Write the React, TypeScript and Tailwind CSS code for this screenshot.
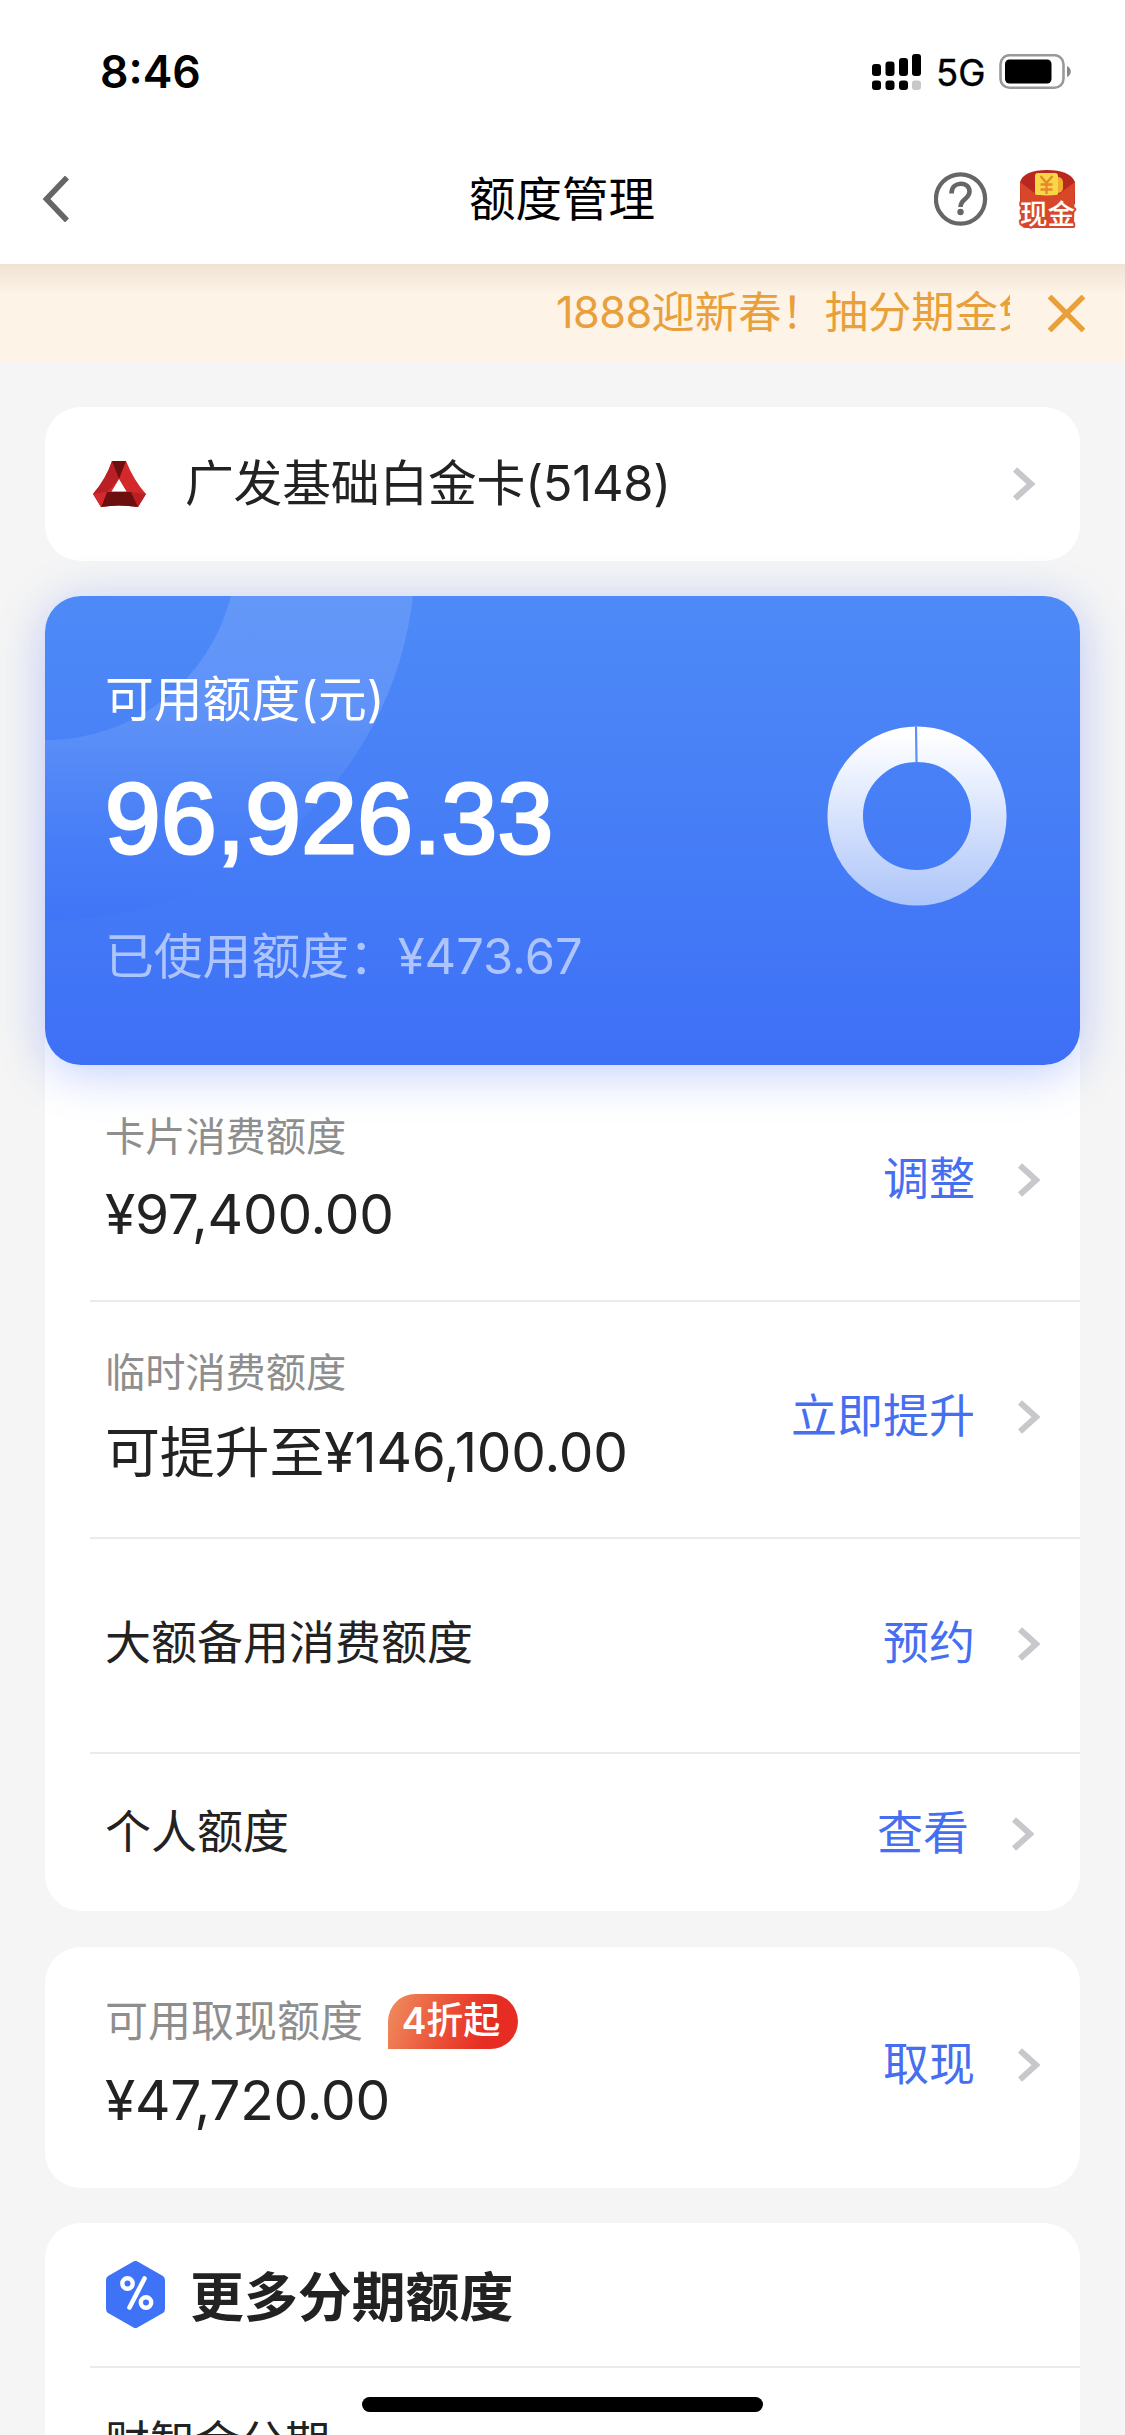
import { ReactNode } from "react";

const Chevron = () => (
    <svg className="w-[22px] h-[34px] shrink-0" viewBox="0 0 22 34" fill="none">
        <path d="M2 2.5 L18 17 L2 31.5" stroke="#c7c7cc" strokeWidth="6" />
    </svg>
);

const StatusBar = () => (
    <div className="flex h-[144px] pl-[100px] pr-[53px] justify-between">
        <div className="text-[44.5px] leading-[144px] font-semibold text-black">8:46</div>
        <div className="flex items-center h-[144px]">
            <svg className="w-[50px] h-[37px]" viewBox="0 0 50 37">
                <rect x="0" y="10" width="9" height="12" rx="3" />
                <rect x="13.5" y="7.5" width="9" height="14.5" rx="3" />
                <rect x="27" y="4" width="9" height="18" rx="3" />
                <rect x="40" y="0" width="9" height="22" rx="3" />
                <rect x="0" y="26.5" width="9" height="9.5" rx="3" />
                <rect x="13.5" y="26.5" width="9" height="9.5" rx="3" />
                <rect x="27" y="26.5" width="9" height="9.5" rx="3" />
                <rect x="40" y="26.5" width="9" height="9.5" rx="3" fill="#c8c8c8" />
            </svg>
            <span className="ml-[14px] w-[49px] pt-[2px] text-[36.5px] leading-[148px] text-black whitespace-nowrap [-webkit-text-stroke:0.4px_#000]">5G</span>
            <svg className="ml-[14px] w-[73px] h-[36px]" viewBox="0 0 73 36">
                <rect x="1.5" y="1.2" width="63" height="32.6" rx="9" fill="none" stroke="#999" strokeWidth="2.6" />
                <rect x="6" y="5.5" width="46.5" height="24" rx="4.5" />
                <path d="M68 12 C73 14 73 21 68 23 Z" fill="#888" />
            </svg>
        </div>
    </div>
);

const RedPacket = () => (
    <svg className="ml-[31px] w-[57px] h-[58px] overflow-visible" viewBox="0 0 57 58">
        <path d="M1 12 Q5 0 28 0 Q51 0 56 12 L56 34 L1 34 Z" fill="#b9281f" />
        <rect x="30" y="7" width="14" height="16" rx="5" fill="#eeae2e" />
        <rect x="16" y="3" width="23" height="23" rx="3" fill="#f8d648" />
        <path d="M1 12 L17 24 Q28 27 40 24 L56 12 L55 53 Q55 58 50 58 L7 58 Q2 58 2 53 Z" fill="#d9472b" />
        <rect x="16" y="12" width="23" height="13" rx="2" fill="#f8d648" />
        <path d="M21.5 6 L27.5 13 L33.5 6 M27.5 13 L27.5 24 M21.5 14.5 L33.5 14.5 M21.5 19.5 L33.5 19.5" stroke="#e8862c" strokeWidth="2.4" fill="none" />
        <text x="28.5" y="54" fontSize="27.5" textAnchor="middle" fill="#fff" fontWeight="500" stroke="#d9472b" strokeWidth="4" strokeLinejoin="round" paintOrder="stroke">现金</text>
    </svg>
);

const NavBar = () => (
    <div className="flex items-center h-[120px] pb-[10px] pl-[42px] pr-[49px]">
        <svg className="w-[27px] h-[46px]" viewBox="0 0 27 46" fill="none">
            <path d="M25 1.5 L4.5 23 L25 44.5" stroke="#666" strokeWidth="5.6" />
        </svg>
        <h1 className="flex-1 pl-[400px] text-[46.5px] leading-[60px] text-black">额度管理</h1>
        <svg className="w-[54px] h-[56px]" viewBox="0 0 54 56" fill="none">
            <circle cx="26.5" cy="28" r="24.6" stroke="#666" strokeWidth="4.2" />
            <path d="M17.5 22.5 C17.5 9.5 35.5 10 35.5 20.5 C35.5 28 26.5 28 26.5 36" stroke="#666" strokeWidth="4.6" />
            <circle cx="26.5" cy="41" r="3.2" fill="#666" />
        </svg>
        <RedPacket />
    </div>
);

const Notice = () => (
    <div className="h-[98px] bg-[#fdf3e6]">
        <div className="flex items-center h-full bg-[linear-gradient(rgba(110,85,60,0.1),rgba(110,85,60,0)_30px)]">
            <div className="ml-[556px] w-[454px] overflow-hidden whitespace-nowrap text-[43.3px] leading-[60px] text-[#e8a03c] pb-[2px]">
                <span className="tracking-[-0.6px]">1888</span>迎新春！抽分期金免
            </div>
            <svg className="ml-[38px] w-[37px] h-[37px]" viewBox="0 0 37 37">
                <path d="M1.5 1.5 L35.5 35.5 M35.5 1.5 L1.5 35.5" stroke="#e8a03c" strokeWidth="5.4" />
            </svg>
        </div>
    </div>
);

const BankLogo = () => (
    <svg className="w-[54px] h-[46px]" viewBox="0 0 54 46">
        <path d="M19 0 L33 0 Q41 20 53 33 L45 46 Q26 43 8 46 L0 33 Q13 18 19 0 Z" fill="#d3282c" />
        <path d="M19 0 L26 18 L14 31 L0 33 Q13 18 19 0 Z" fill="#b91f24" />
        <path d="M38 31 L53 33 L45 46 Z" fill="#b91f24" />
        <path d="M19 0 L33 0 L26 18 Z" fill="#6d0f0e" />
        <path d="M14 31 L38 31 L45 46 Q26 43 8 46 Z" fill="#6d0f0e" />
        <path d="M0 33 L14 31 L8 46 Z" fill="#d3282c" />
        <path d="M26 18 L33.5 30.5 L18.5 30.5 Z" fill="#fff" />
    </svg>
);

const BalanceCard = () => (
    <div className="relative overflow-hidden h-[469px] rounded-[36px] bg-gradient-to-b from-[#4e8af7] to-[#3e70f6]">
        <svg className="absolute left-0 top-0 w-[400px] h-[340px]" viewBox="0 0 400 340" fill="none">
            <defs>
                <linearGradient id="ring" x1="0" y1="0" x2="0" y2="1">
                    <stop offset="0.35" stopColor="#fff" stopOpacity="0.12" />
                    <stop offset="0.75" stopColor="#5a88fb" stopOpacity="0.1" />
                    <stop offset="1" stopColor="#2f62f5" stopOpacity="0.14" />
                </linearGradient>
            </defs>
            <path d="M368 0 A365 365 0 0 1 0 324 L0 144 A190 190 0 0 0 186 0 Z" fill="url(#ring)" />
        </svg>
        <div className="relative flex h-full justify-between">
            <div className="pl-[60px] pt-[74px]">
                <div className="text-[48.8px] leading-[60px] text-white">可用额度(元)</div>
                <div className="mt-[38px] font-['Liberation_Sans'] text-[100px] leading-[100px] tracking-[0.4px] text-white [-webkit-text-stroke:3px_#fff]">96,926.33</div>
                <div className="mt-[59px] text-[48.8px] leading-[60px] text-[#adc5fc]">已使用额度：¥473.67</div>
            </div>
            <svg className="mt-[129px] mr-[73px] w-[180px] h-[181px]" viewBox="0 0 180 181" fill="none">
                <defs>
                    <linearGradient id="donut" x1="0" y1="0" x2="0" y2="181" gradientUnits="userSpaceOnUse">
                        <stop offset="0.05" stopColor="#fff" />
                        <stop offset="1" stopColor="#adc5fa" />
                    </linearGradient>
                </defs>
                <circle cx="90" cy="91" r="71.8" stroke="url(#donut)" strokeWidth="35.5" />
                <path d="M89 0 L89.5 37" stroke="#5d91f8" strokeWidth="2.2" />
            </svg>
        </div>
    </div>
);

type RowProps = {
    className: string;
    action: string;
    actionClass: string;
    children: ReactNode;
};

const Row = ({ className, action, actionClass, children }: RowProps) => (
    <div className={`flex justify-between ml-[45px] pl-[15px] ${className}`}>
        <div>{children}</div>
        <div className={`flex items-center gap-[43px] ${actionClass}`}>
            <span className="pb-[4px] text-[46px] leading-[60px] text-[#456ff0]">{action}</span>
            <Chevron />
        </div>
    </div>
);

const App = () => {
    return (
        <div className="relative w-[1125px] h-[2435px] overflow-hidden bg-[#f5f5f5] font-[Inter,'Noto_Sans_CJK_SC',sans-serif] text-[#222]">
            <div className="bg-white">
                <StatusBar />
                <NavBar />
            </div>
            <Notice />

            <div className="px-[45px] pt-[45px]">
                <div className="flex items-center h-[154px] rounded-[36px] bg-white pl-[48px] pr-[45px]">
                    <BankLogo />
                    <span className="flex-1 ml-[38px] text-[48.8px] leading-[60px] tracking-[-0.2px]">广发基础白金卡(5148)</span>
                    <Chevron />
                </div>

                <div className="mt-[35px] rounded-[36px] bg-white">
                    <div className="rounded-[36px] shadow-[0_8px_48px_rgba(62,100,246,0.32)]">
                        <BalanceCard />
                    </div>
                    <Row className="h-[237px] border-b-2 border-[#ebebeb]" action="调整" actionClass="pr-[40px] pb-[5px]">
                        <div className="pt-[42px] text-[40.2px] leading-[60px] text-[#8e8e8e]">卡片消费额度</div>
                        <div className="mt-[17px] text-[55px] leading-[60px] tracking-[-0.2px]">¥97,400.00</div>
                    </Row>
                    <Row className="h-[237px] border-b-2 border-[#ebebeb]" action="立即提升" actionClass="pr-[40px] pb-[5px]">
                        <div className="pt-[41px] text-[40.2px] leading-[60px] text-[#8e8e8e]">临时消费额度</div>
                        <div className="mt-[19px] text-[55px] leading-[60px] tracking-[-0.2px]">可提升至¥146,100.00</div>
                    </Row>
                    <Row className="h-[215px] border-b-2 border-[#ebebeb]" action="预约" actionClass="pr-[40px] pb-[3px]">
                        <div className="pt-[73px] text-[46px] leading-[60px]">大额备用消费额度</div>
                    </Row>
                    <Row className="h-[157px]" action="查看" actionClass="pr-[46px] pt-[3px]">
                        <div className="pt-[47px] text-[46px] leading-[60px]">个人额度</div>
                    </Row>
                </div>

                <div className="mt-[36px] rounded-[36px] bg-white">
                    <Row className="h-[241px]" action="取现" actionClass="pr-[40px] pb-[5px]">
                        <div className="flex items-center gap-[25px] pt-[44px]">
                            <span className="text-[43px] leading-[60px] text-[#8e8e8e]">可用取现额度</span>
                            <span className="h-[55px] w-[130px] pr-[4px] text-center rounded-[28px] rounded-bl-none bg-[linear-gradient(110deg,#f08f60,#ea5036_45%,#e72d23_75%)] text-[37px] leading-[54px] font-medium text-white">
                                <span className="font-semibold">4</span>折起
                            </span>
                        </div>
                        <div className="mt-[19px] text-[55px] leading-[60px] tracking-[-0.2px]">¥47,720.00</div>
                    </Row>
                </div>

                <div className="mt-[35px] rounded-t-[36px] bg-white">
                    <div className="flex items-center h-[145px] ml-[45px] pl-[15px] border-b-2 border-[#ebebeb]">
                        <svg className="w-[61px] h-[67px]" viewBox="0 0 61 67" fill="none">
                            <path d="M30.5 5 L55 19 L55 48 L30.5 62 L6 48 L6 19 Z" fill="#3e72f7" stroke="#3e72f7" strokeWidth="10" strokeLinejoin="round" />
                            <circle cx="22.5" cy="22.5" r="5.2" stroke="#fff" strokeWidth="4.4" />
                            <circle cx="41" cy="41.5" r="5.2" stroke="#fff" strokeWidth="4.4" />
                            <path d="M39.5 17.5 L24.5 46.5" stroke="#fff" strokeWidth="4.6" strokeLinecap="round" />
                        </svg>
                        <span className="ml-[24px] pt-[6px] text-[53.9px] leading-[60px] font-bold">更多分期额度</span>
                    </div>
                    <div className="pl-[60px] pt-[45px] text-[45px] leading-[60px]">财智金分期</div>
                </div>
            </div>

            <div className="absolute left-[362px] top-[2397px] w-[401px] h-[15px] rounded-full bg-black" />
        </div>
    );
};

export default App;
